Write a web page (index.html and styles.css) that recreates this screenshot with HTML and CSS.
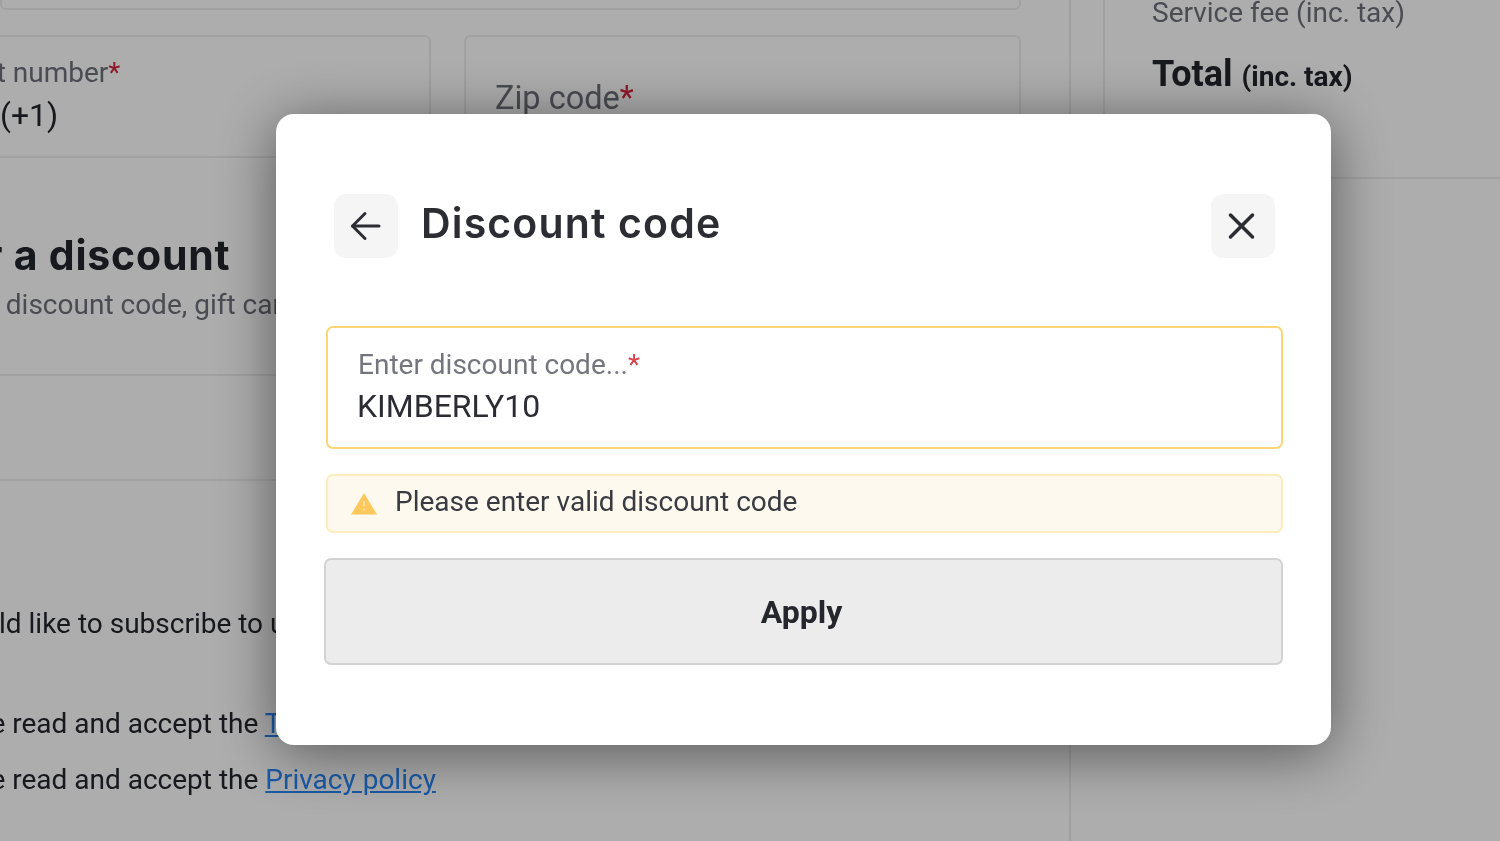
FILE: index.html
```html
<!DOCTYPE html>
<html lang="en">
<head>
  <meta charset="UTF-8">
  <meta name="viewport" content="width=device-width, initial-scale=1.0">
  <title>Checkout - Discount code</title>
  <link rel="stylesheet" href="styles.css">
</head>
<body>
  <div class="page">
    <main class="main">
      <div class="field field-top"></div>
      <div class="form-row">
        <div class="field field-phone">
          <span class="field-label phone-label">Contact number<em>*</em></span>
          <span class="field-value">(+1)</span>
        </div>
        <div class="field field-zip">
          <span class="zip-label">Zip code<em>*</em></span>
        </div>
      </div>
      <section class="discount">
        <h2 class="discount-title">Enter a discount</h2>
        <p class="discount-sub">Enter discount code, gift card or voucher</p>
      </section>
      <div class="blank-section"></div>
      <section class="consents">
        <p class="consent consent-news">I would like to subscribe to updates</p>
        <p class="consent consent-terms">I have read and accept the <a href="#">Terms and conditions</a></p>
        <p class="consent consent-privacy">I have read and accept the <a href="#">Privacy policy</a></p>
      </section>
    </main>
    <aside class="aside">
      <div class="summary">
        <p class="summary-fee">Service fee (inc. tax)</p>
        <p class="summary-total">Total <small>(inc. tax)</small></p>
      </div>
    </aside>
  </div>

  <div class="overlay">
    <div class="modal">
      <header class="modal-head">
        <button class="icon-btn" type="button" aria-label="Back">
          <svg width="32" height="32" viewBox="0 0 32 32" fill="none" stroke="#2c2d33" stroke-width="3" stroke-linecap="round" stroke-linejoin="round"><path d="M29 16H2.500"/><path d="M15 3.500 2.500 16 15 28.500"/></svg>
        </button>
        <h1 class="modal-title">Discount code</h1>
        <button class="icon-btn" type="button" aria-label="Close">
          <svg class="close-icon" width="28" height="28" viewBox="0 0 28 28" fill="none" stroke="#2c2d33" stroke-width="3.500" stroke-linecap="round"><path d="M2.500 3 24.500 25"/><path d="M24.500 3 2.500 25"/></svg>
        </button>
      </header>

      <div class="code-field">
        <span class="code-label">Enter discount code...<em>*</em></span>
        <span class="code-value">KIMBERLY10</span>
      </div>

      <div class="alert">
        <svg width="28" height="22" viewBox="0 0 28 22"><path d="M14 0 27 21.500H1Z" fill="#fdc95c"/><path d="M14 8v5M14 15.500v2" stroke="#fff" stroke-width="1.500" stroke-opacity=".55"/></svg>
        <span class="alert-text">Please enter valid discount code</span>
      </div>

      <button class="apply-btn" type="button">Apply</button>
    </div>
  </div>
</body>
</html>
```

FILE: styles.css
```css
* { margin: 0; padding: 0; box-sizing: border-box; }
body { background: #fff; color: #23252b; font-family: 'Roboto', sans-serif; overflow: hidden; }
em { font-style: normal; color: #d3243c; }

/* page behind the dialog */
.page { display: flex; width: 1500px; height: 841px; overflow: hidden; background: #fff; filter: blur(0.5px); }
.main { flex: 0 0 1071px; height: 841px; border-right: 2px solid #ededed; padding-right: 48px; }
.aside { flex: 1; margin-left: 32px; }

.field { border: 2px solid #ededed; border-radius: 6px; }
.field-top { height: 70px; margin-top: -60px; margin-bottom: 25px; }
.form-row { display: flex; gap: 33px; height: 123px; }
.field-phone { flex: 0 0 431px; padding-top: 19px; border-left: 0; border-radius: 0 6px 6px 0; display: flex; flex-direction: column; overflow: hidden; }
.field-zip { flex: 1; padding: 41px 0 0 29px; }
.field-label { font-size: 28px; line-height: 34px; color: #6d7078; white-space: nowrap; }
.phone-label { margin-left: -92px; }
.field-value { font-size: 32px; line-height: 40px; margin-top: 5px; }
.zip-label { font-size: 32.500px; line-height: 40px; color: #6d7078; }

.discount { height: 218px; margin-right: -48px; padding-top: 72px; border-bottom: 2px solid #ededed; white-space: nowrap; overflow: hidden; }
.discount-title { font-family: 'Inter', sans-serif; font-weight: 700; font-size: 41px; line-height: 50px; letter-spacing: 0.8px; margin-left: -107px; }
.discount-sub { font-size: 28px; line-height: 34px; color: #6d7078; margin: 8px 0 0 -66px; }
.blank-section { height: 105px; margin-right: -48px; border-bottom: 2px solid #ededed; }

.consents { overflow: hidden; white-space: nowrap; }
.consent { font-size: 28px; line-height: 34px; }
.consent-news { margin: 126px 0 0 -68px; }
.consent-terms { margin: 66px 0 0 -68px; }
.consent-privacy { margin: 22px 0 0 -68px; }
.consent a { color: #2686f5; }

.summary { height: 183px; margin-top: -4px; padding-left: 47px; border-left: 2px solid #ededed; border-bottom: 2px solid #ededed; }
.summary-fee { font-size: 28px; line-height: 34px; color: #6d7078; }
.summary-total { font-size: 36px; line-height: 44px; font-weight: 700; margin-top: 22px; }
.summary-total small { font-size: 28px; }

/* dialog */
.overlay { position: fixed; inset: 0; background: rgba(0,0,0,0.32); padding: 114px 0 0 276px; }
.modal { width: 1055px; height: 631px; background: #fff; border-radius: 18px; box-shadow: 0 8px 60px rgba(0,0,0,0.5); padding: 80px 48px 0 48px; }
.modal-head { display: flex; align-items: center; height: 64px; padding: 0 8px 0 10px; }
.icon-btn { flex: 0 0 64px; height: 64px; display: flex; align-items: center; justify-content: center; border: none; border-radius: 12px; background: #f5f5f6; }
.close-icon { margin-right: 2px; }
.modal-title { flex: 1; margin: -6px 0 0 23px; font-family: 'Inter', sans-serif; font-weight: 600; font-size: 41px; line-height: 50px; letter-spacing: 1.15px; color: #2c2d33; }

.code-field { display: flex; flex-direction: column; height: 123px; margin: 68px 0 0 2px; padding: 20px 30px 0; border: 2px solid #fcd676; border-radius: 7px; }
.code-label { font-size: 28px; line-height: 34px; color: #74767d; }
.code-label em { color: #d64550; }
.code-value { font-size: 32px; line-height: 40px; margin: 4px 0 0 -1px; color: #2c2d33; }

.alert { display: flex; align-items: center; gap: 17px; height: 59px; margin: 25px 0 0 2px; padding-left: 22px; background: #fef9ef; border: 2px solid #fdecbd; border-radius: 7px; font-size: 28px; color: #3a3b40; }
.alert-text { margin-top: -5px; }

.apply-btn { display: block; width: 959px; height: 107px; margin-top: 25px; padding-right: 4px; background: #ececec; border: 2px solid #d2d2d2; border-radius: 7px; font-family: 'Roboto', sans-serif; font-size: 32px; font-weight: 700; color: #26272c; }
```
